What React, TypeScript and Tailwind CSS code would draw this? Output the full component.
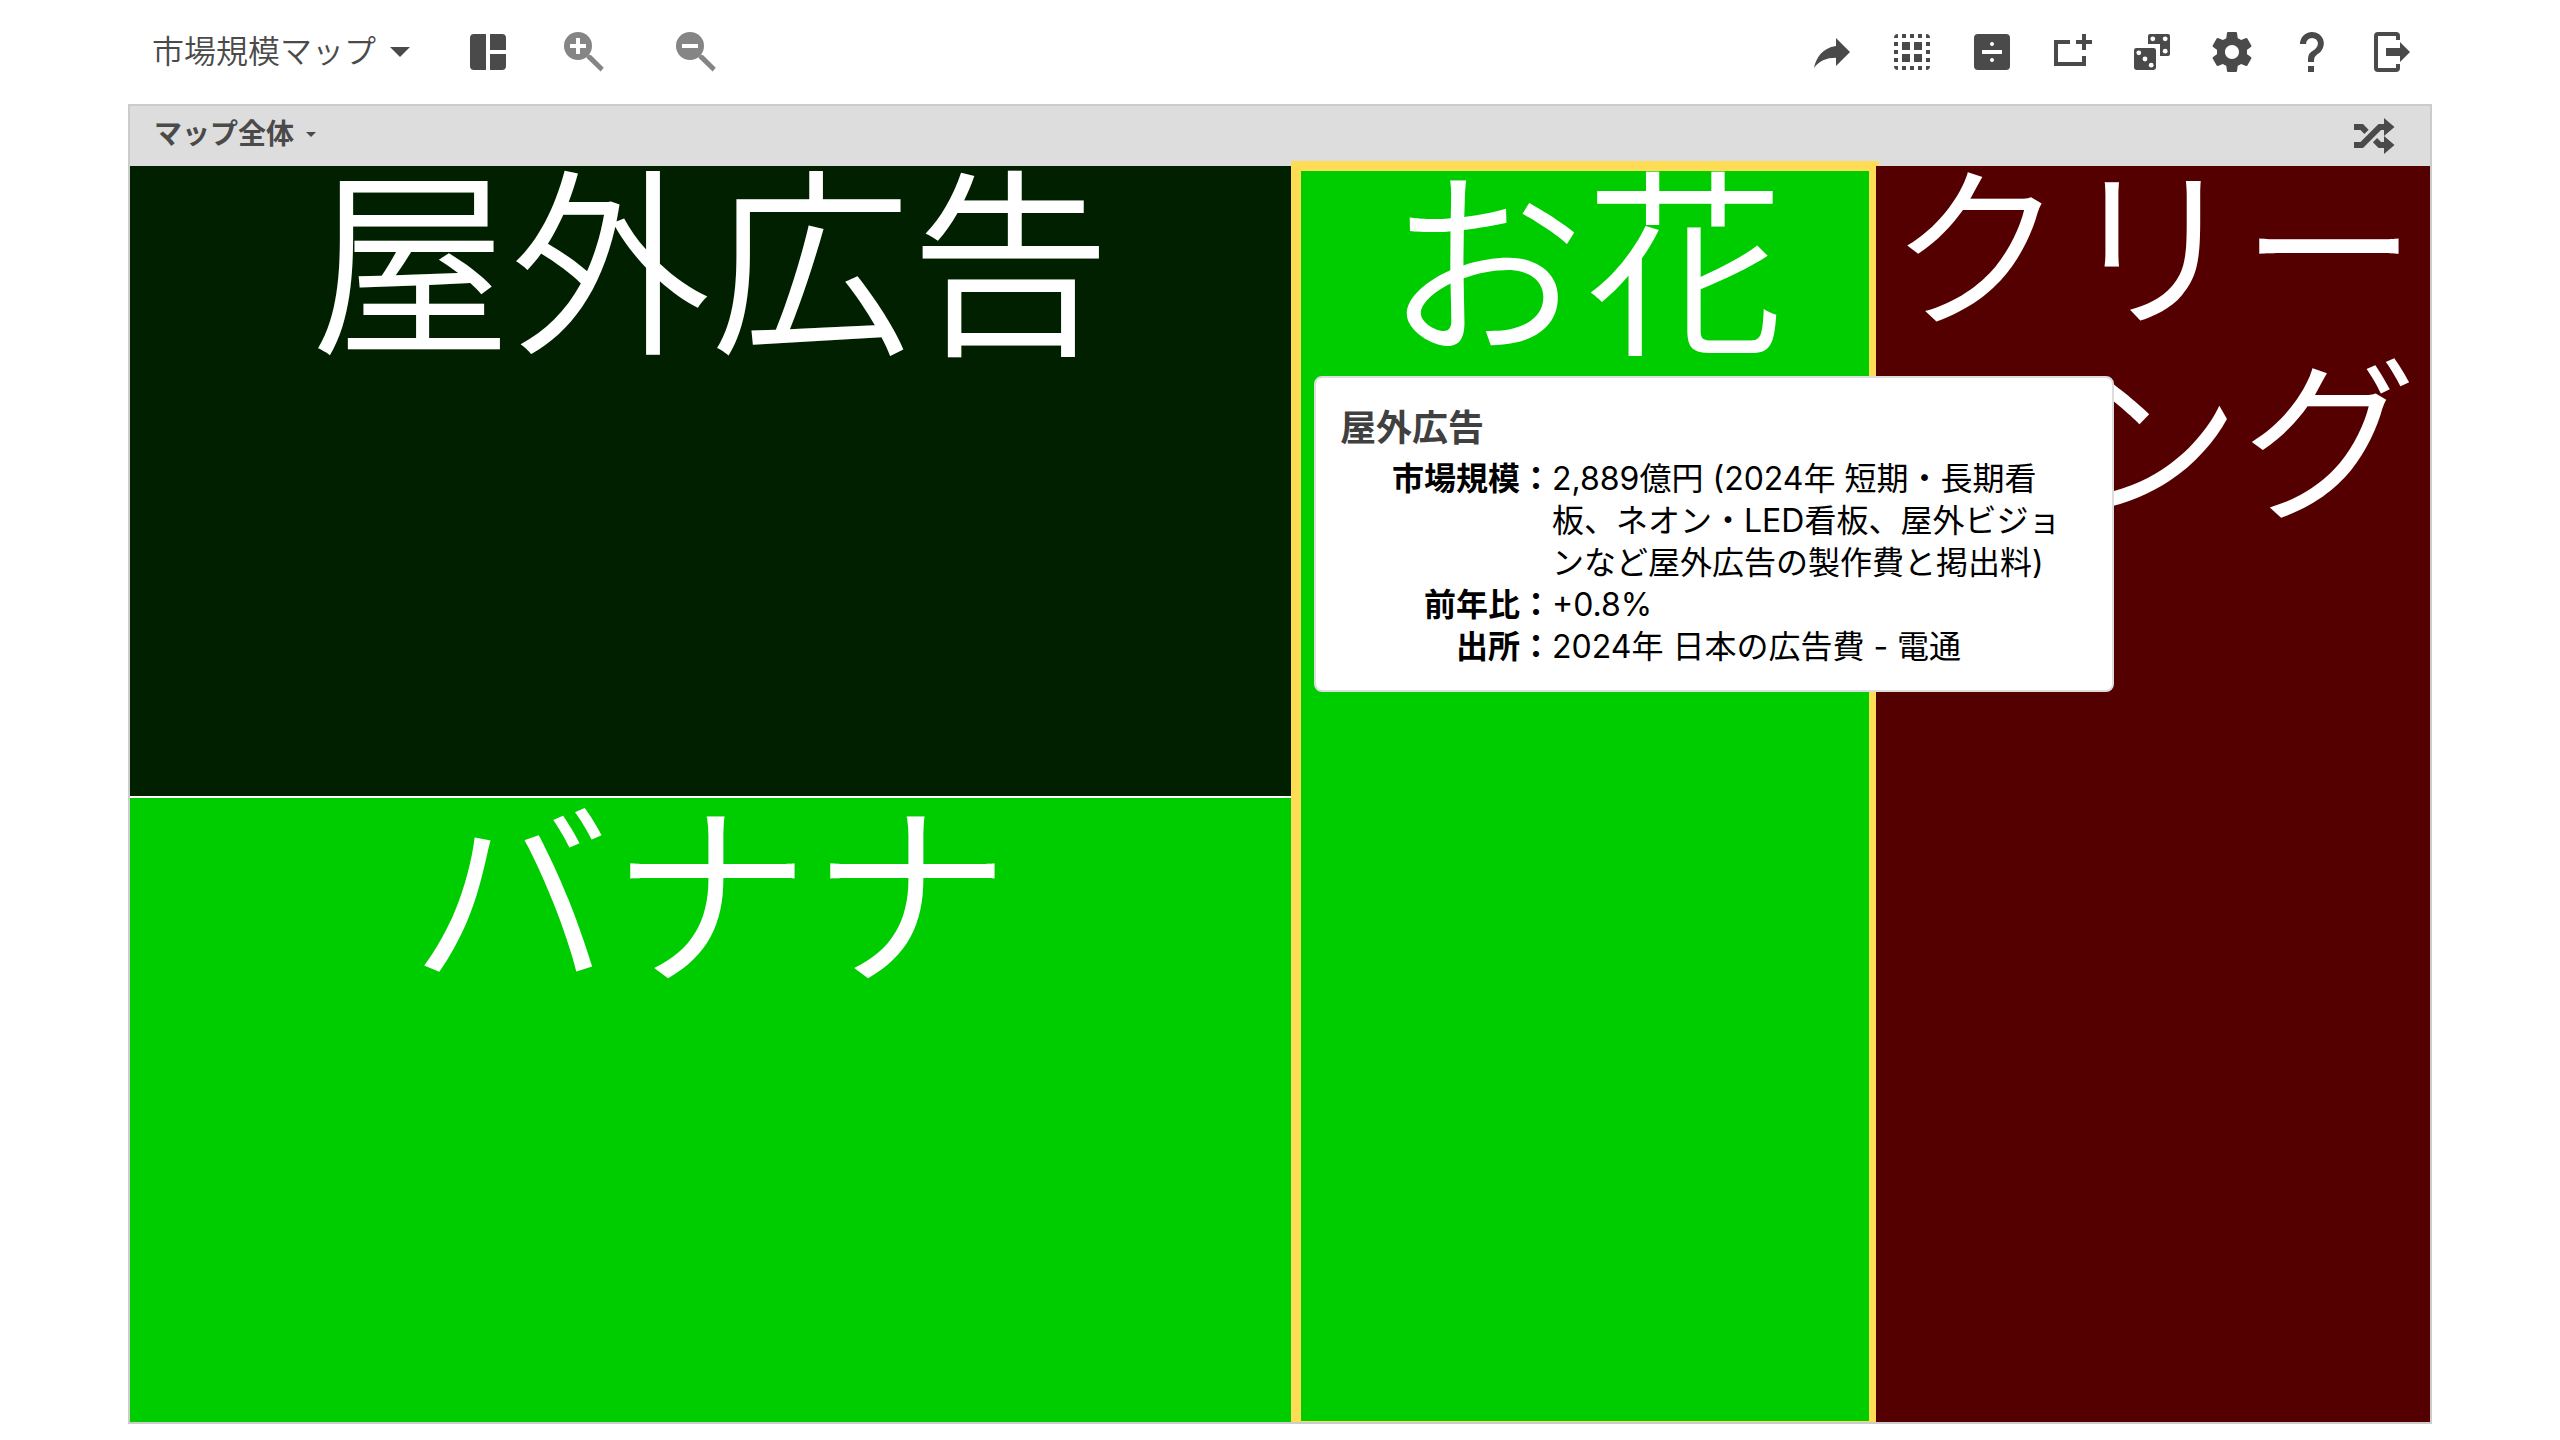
import type { ReactNode } from "react";

function Icon({ children }: { children: ReactNode }) {
  return (
    <svg viewBox="0 0 24 24" className="size-12" fill="currentColor" aria-hidden="true">
      {children}
    </svg>
  );
}

function ToolButton({ label, children }: { label: string; children: ReactNode }) {
  return (
    <button type="button" aria-label={label} className="size-12 shrink-0">
      <Icon>{children}</Icon>
    </button>
  );
}

function Dots({ points, r }: { points: number[][]; r: number }) {
  return (
    <>
      {points.map(([x, y]) => (
        <circle key={`${x}-${y}`} cx={x} cy={y} r={r} fill="#fff" />
      ))}
    </>
  );
}

const magnifier = (
  <>
    <circle cx="9" cy="9" r="7" />
    <path d="M13.2 14.5 14.5 13.4 15.6 13.6 21.9 19.9 20.3 21.8 13.6 15.2Z" />
  </>
);

const edge = [7, 11, 15];

function Toolbar() {
  return (
    <header className="flex h-26 shrink-0 items-center pr-4 pl-6">
      <button type="button" className="flex items-center gap-3.5 text-[32px] leading-12 font-[350]">
        市場規模マップ
        <svg viewBox="0 0 20 10" className="h-2.5 w-5" fill="currentColor" aria-hidden="true">
          <path d="M0 0h20L10 10z" />
        </svg>
      </button>
      <div className="ml-[54px] flex">
        <ToolButton label="レイアウト">
          <path d="M11 21H5a2 2 0 0 1-2-2V5a2 2 0 0 1 2-2h6zM13 3h6a2 2 0 0 1 2 2v6h-8zM13 13h8v6a2 2 0 0 1-2 2h-6z" />
        </ToolButton>
      </div>
      <div className="ml-12 flex gap-16 text-[#858585]">
        <ToolButton label="拡大">
          {magnifier}
          <path fill="#fff" d="M8 5h2v3h3v2h-3v3H8v-3H5V8h3z" />
        </ToolButton>
        <ToolButton label="縮小">
          {magnifier}
          <path fill="#fff" d="M5 8h8v2H5z" />
        </ToolButton>
      </div>
      <div className="ml-auto flex gap-8">
        <ToolButton label="共有">
          <path d="M14 9V5l7 7-7 7v-4.1c-5 0-8.5 1.6-11 5.1 1-5 4-10 11-11z" />
        </ToolButton>
        <ToolButton label="選択">
          {edge.map((p) => (
            <path key={p} d={`M${p} 3h2v2h-2zM${p} 19h2v2h-2zM3 ${p}h2v2H3zM19 ${p}h2v2h-2z`} />
          ))}
          <path d="M5 3v2H3a2 2 0 0 1 2-2zM19 3a2 2 0 0 1 2 2h-2zM3 19h2v2a2 2 0 0 1-2-2zM19 19h2a2 2 0 0 1-2 2z" />
          <path d="M7 7h4v4H7zM13 7h4v4h-4zM7 13h4v4H7zM13 13h4v4h-4z" />
        </ToolButton>
        <ToolButton label="割り算">
          <rect x="3" y="3" width="18" height="18" rx="2" />
          <path fill="#fff" d="M7 11h10v2H7z" />
          <Dots points={[[12, 8], [12, 16]]} r={1} />
        </ToolButton>
        <ToolButton label="領域を追加">
          <path d="M3 6h8v2H5v9h12v-3h2v5H3zM17 3h2v3h3v2h-3v3h-2V8h-3V6h3z" />
        </ToolButton>
        <ToolButton label="ランダム">
          <path d="M11 3h9a1 1 0 0 1 1 1v9a1 1 0 0 1-1 1h-4V8h-6V4a1 1 0 0 1 1-1z" />
          <rect x="3" y="10" width="11" height="11" rx="1.2" />
          <Dots points={[[12.4, 5.4], [18.6, 5.4], [18.6, 11.6], [5.4, 12.4], [8.5, 15.5], [11.6, 18.6]]} r={1.2} />
        </ToolButton>
        <ToolButton label="設定">
          <path d="M19.43 12.98c.04-.32.07-.64.07-.98s-.03-.66-.07-.98l2.11-1.65c.19-.15.24-.42.12-.64l-2-3.46c-.12-.22-.39-.3-.61-.22l-2.49 1c-.52-.4-1.08-.73-1.69-.98l-.38-2.65C14.46 2.18 14.25 2 14 2h-4c-.25 0-.46.18-.49.42l-.38 2.65c-.61.25-1.17.59-1.69.98l-2.49-1c-.23-.09-.49 0-.61.22l-2 3.46c-.13.22-.07.49.12.64l2.11 1.65c-.04.32-.07.65-.07.98s.03.66.07.98l-2.11 1.65c-.19.15-.24.42-.12.64l2 3.46c.12.22.39.3.61.22l2.49-1c.52.4 1.08.73 1.69.98l.38 2.65c.03.24.24.42.49.42h4c.25 0 .46-.18.49-.42l.38-2.65c.61-.25 1.17-.59 1.69-.98l2.49 1c.23.09.49 0 .61-.22l2-3.46c.12-.22.07-.49-.12-.64l-2.11-1.65zM12 15.5c-1.93 0-3.5-1.57-3.5-3.5s1.57-3.5 3.5-3.5 3.5 1.57 3.5 3.5-1.57 3.5-3.5 3.5z" />
        </ToolButton>
        <ToolButton label="ヘルプ">
          <path d="M10 19h3v3h-3zM12 2C17.35 2.22 19.68 7.62 16.5 11.67C15.67 12.67 14.33 13.33 13.67 14.17C13 15 13 16 13 17H10C10 15.33 10 13.92 10.67 12.92C11.33 11.92 12.67 11.33 13.5 10.67C15.92 8.43 15.32 5.26 12 5A3 3 0 0 0 9 8H6A6 6 0 0 1 12 2Z" />
        </ToolButton>
        <ToolButton label="終了">
          <path d="M16 17V14H9V10H16V7L21 12L16 17M14 2A2 2 0 0 1 16 4V6H14V4H5V20H14V18H16V20A2 2 0 0 1 14 22H5A2 2 0 0 1 3 20V4A2 2 0 0 1 5 2H14Z" />
        </ToolButton>
      </div>
    </header>
  );
}

const facts = [
  {
    label: "市場規模：",
    value: "2,889億円 (2024年 短期・長期看板、ネオン・LED看板、屋外ビジョンなど屋外広告の製作費と掲出料)",
  },
  { label: "前年比：", value: "+0.8%" },
  { label: "出所：", value: "2024年 日本の広告費 - 電通" },
];

function Tooltip() {
  return (
    <div
      role="tooltip"
      className="absolute top-[205px] left-[13px] z-20 w-[800px] rounded-lg border-2 border-[#ddd] bg-white px-6 pt-6 pb-[22px] text-left text-[32px] leading-[42px] font-[390] text-black"
    >
      <h2 className="mb-1 text-[36px] leading-[52px] font-bold text-[#404040]">屋外広告</h2>
      <dl className="grid grid-cols-[212px_1fr] pr-2">
        {facts.map((f) => (
          <div key={f.label} className="contents">
            <dt className="text-right font-bold">{f.label}</dt>
            <dd>{f.value}</dd>
          </div>
        ))}
      </dl>
    </div>
  );
}

export default function App() {
  return (
    <div className="flex h-screen flex-col bg-white pb-4 font-['Inter','Noto_Sans_CJK_JP',sans-serif] text-[#4a4a4a]" lang="ja">
      <div className="mx-auto flex min-h-0 w-[90%] flex-1 flex-col">
        <Toolbar />
        <main className="flex min-h-0 flex-1 flex-col border-2 border-[#ccc]">
          <div className="flex h-15 shrink-0 items-center justify-between bg-[#ddd] pr-8 pl-6">
            <button type="button" className="flex items-center gap-3 pb-1 text-[28px] leading-10 font-bold">
              マップ全体
              <svg viewBox="0 0 10 5" className="h-[5px] w-2.5" fill="currentColor" aria-hidden="true">
                <path d="M0 0h10L5 5z" />
              </svg>
            </button>
            <ToolButton label="シャッフル">
              <path d="M17 3L22.25 7.5L17 12L22.25 16.5L17 21V18H14.26L11.44 15.18L13.56 13.06L15.5 15H17V12V9H15.5L6.5 18H2V15H5.26L14.26 6H17V3M2 6H6.5L9.32 8.82L7.2 10.94L5.26 9H2V6Z" />
            </ToolButton>
          </div>
          <div className="grid min-h-0 flex-1 grid-cols-[1161fr_585fr_554fr] text-center text-[200px] leading-[200px] font-[350] text-white">
            <div className="grid grid-rows-[630fr_624fr] gap-0.5">
              <section className="bg-[#002000]">屋外広告</section>
              <section className="bg-[#00cd00]">バナナ</section>
            </div>
            <section className="relative -mt-[5px] -mr-[3px] border-10 border-b border-[#ffdc56] bg-[#00cd00]">
              <p className="-mt-1">お花</p>
              <Tooltip />
            </section>
            <section className="relative z-10 bg-[#550000] text-[176px] leading-[192px]">
              <p className="-mt-3">クリーニング</p>
            </section>
          </div>
        </main>
      </div>
    </div>
  );
}
